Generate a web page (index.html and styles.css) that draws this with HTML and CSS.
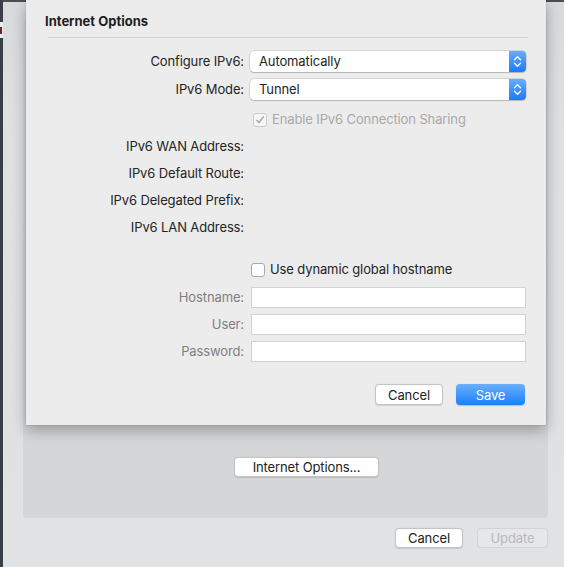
FILE: index.html
```html
<!DOCTYPE html>
<html>
<head>
<meta charset="utf-8">
<link rel="stylesheet" href="styles.css">
</head>
<body>
<div class="screen">
  <div class="edge"><div class="edge-peek"><span class="peek-mark"></span></div></div>
  <div class="window">
    <div class="group">
      <button class="btn btn-options">Internet Options...</button>
    </div>
    <div class="footer">
      <button class="btn btn-cancel-main">Cancel</button>
      <button class="btn btn-disabled">Update</button>
    </div>

    <div class="sheet">
      <div class="sheet-title">Internet Options</div>
      <div class="sep"></div>
      <div class="form">
        <div class="row row-popup">
          <div class="label">Configure IPv6:</div>
          <div class="popup"><span class="popup-text">Automatically</span><span class="popup-arrow"><svg width="9" height="13" viewBox="0 0 9 13"><path d="M1.5 4.8 L4.5 1.8 L7.5 4.8 M1.5 8.2 L4.5 11.2 L7.5 8.2" fill="none" stroke="#fff" stroke-width="1.3" stroke-linecap="round" stroke-linejoin="round"/></svg></span></div>
        </div>
        <div class="row row-popup row-gap7">
          <div class="label">IPv6 Mode:</div>
          <div class="popup"><span class="popup-text">Tunnel</span><span class="popup-arrow"><svg width="9" height="13" viewBox="0 0 9 13"><path d="M1.5 4.8 L4.5 1.8 L7.5 4.8 M1.5 8.2 L4.5 11.2 L7.5 8.2" fill="none" stroke="#fff" stroke-width="1.3" stroke-linecap="round" stroke-linejoin="round"/></svg></span></div>
        </div>
        <div class="row row-line row-share">
          <div class="label"></div>
          <div class="check-wrap disabled">
            <span class="checkbox checked"><svg width="10" height="10" viewBox="0 0 10 10"><path d="M1.8 5.2 L4 7.6 L8.4 1.8" fill="none" stroke="#a8a8a8" stroke-width="1.5" stroke-linecap="round" stroke-linejoin="round"/></svg></span>
            <span class="check-text">Enable IPv6 Connection Sharing</span>
          </div>
        </div>
        <div class="row row-line"><div class="label">IPv6 WAN Address:</div><div></div></div>
        <div class="row row-line"><div class="label">IPv6 Default Route:</div><div></div></div>
        <div class="row row-line"><div class="label">IPv6 Delegated Prefix:</div><div></div></div>
        <div class="row row-line"><div class="label">IPv6 LAN Address:</div><div></div></div>
        <div class="row row-line row-host">
          <div class="label"></div>
          <div class="check-wrap check-host">
            <span class="checkbox"></span>
            <span class="check-text">Use dynamic global hostname</span>
          </div>
        </div>
        <div class="row row-field row-first-field">
          <div class="label dim">Hostname:</div>
          <div class="field"></div>
        </div>
        <div class="row row-field">
          <div class="label dim">User:</div>
          <div class="field"></div>
        </div>
        <div class="row row-field">
          <div class="label dim">Password:</div>
          <div class="field"></div>
        </div>
      </div>
      <div class="sheet-buttons">
        <button class="btn btn-cancel">Cancel</button>
        <button class="btn btn-save">Save</button>
      </div>
    </div>
  </div>
</div>
</body>
</html>
```

FILE: styles.css
```css
* { box-sizing: border-box; }
html, body {
  margin: 0;
  padding: 0;
  width: 564px;
  height: 567px;
  overflow: hidden;
  font-family: Inter, "Liberation Sans", sans-serif;
  font-size: 13px;
  letter-spacing: -0.12px;
  color: #242424;
}
.screen {
  display: flex;
  width: 564px;
  height: 567px;
}
.edge {
  width: 3px;
  background: #3a3f47;
  padding-top: 22px;
}
.edge-peek {
  width: 3px;
  height: 16px;
  background: #ececec;
  position: relative;
}
.peek-mark {
  position: absolute;
  left: 0;
  top: 5px;
  width: 2px;
  height: 7px;
  background: #6a2828;
}
.window {
  flex: 1;
  position: relative;
  background: linear-gradient(#d9dadc, #dfe0e2 120px, #e1e2e4);
  border-top: 2px solid #4a4e55;
  padding: 18px 16px 0 20px;
  display: flex;
  flex-direction: column;
}
.group {
  height: 498px;
  background: #d5d6d8;
  border-radius: 4px;
  padding-top: 437px;
  padding-left: 211px;
}
.footer {
  display: flex;
  justify-content: flex-end;
  gap: 14px;
  margin-top: 10px;
}
.btn {
  font-family: inherit;
  font-size: 13px;
  letter-spacing: -0.12px;
  height: 20px;
  padding: 0;
  border-radius: 4px;
  border: 1px solid #c4c4c4;
  background: #fff;
  color: #222;
  box-shadow: 0 0.5px 1px rgba(0,0,0,0.12);
  line-height: 18px;
  text-align: center;
}
.btn-options { width: 145px; }
.btn-cancel-main { width: 68px; }
.btn-disabled {
  width: 71px;
  background: #e6e7e9;
  border-color: #d2d3d5;
  color: #b7b8ba;
  box-shadow: none;
}

.sheet {
  position: absolute;
  left: 23px;
  top: -2px;
  width: 520px;
  height: 425px;
  background: #ececec;
  box-shadow: 0 5px 14px rgba(0,0,0,0.3), 0 0 0 0.5px rgba(0,0,0,0.12);
  padding-top: 13px;
}
.sheet-title {
  font-weight: 700;
  font-size: 13px;
  letter-spacing: 0;
  line-height: 16px;
  padding-left: 19px;
  color: #1e1e1e;
}
.sep {
  height: 1px;
  background: #d3d3d3;
  margin: 8px 18px 0 22px;
}
.form {
  display: flex;
  flex-direction: column;
  margin-top: 13px;
}
.row {
  display: grid;
  grid-template-columns: 218px 276px;
  column-gap: 6px;
  align-items: center;
}
.label {
  text-align: right;
  white-space: nowrap;
  line-height: 15px;
  padding-bottom: 1px;
}
.label.dim { color: #7f7f7f; }
.row-popup { height: 21px; }
.row-gap7 { margin-top: 7px; }
.row-line { height: 27px; }
.row-share { margin-top: 6px; }
.row-host { margin-top: 15px; }
.row-field { height: 21px; margin-top: 6px; }
.row-first-field { margin-top: 4px; }

.popup {
  height: 21px;
  background: #fff;
  border-radius: 4px;
  box-shadow: 0 0 0 0.5px rgba(0,0,0,0.2), 0 1px 1px rgba(0,0,0,0.15);
  display: flex;
  align-items: center;
  justify-content: space-between;
  overflow: hidden;
}
.popup-text {
  padding-left: 9px;
  padding-bottom: 1px;
}
.popup-arrow {
  width: 17px;
  height: 21px;
  background: linear-gradient(#67aefc, #1b7cf6);
  display: flex;
  align-items: center;
  justify-content: center;
}
.check-wrap {
  display: flex;
  align-items: center;
  gap: 5px;
  padding-left: 3px;
}
.check-host { padding-left: 1px; }
.check-text { padding-bottom: 1px; }
.checkbox {
  width: 14px;
  height: 14px;
  border-radius: 3px;
  background: #fff;
  border: 1px solid #a9a9a9;
  display: flex;
  align-items: center;
  justify-content: center;
}
.disabled .checkbox {
  border-color: #cacaca;
  background: #f7f7f7;
}
.disabled .check-text { color: #a9a9a9; }
.field {
  height: 21px;
  margin-left: 1px;
  background: #fff;
  border: 1px solid #d3d3d3;
}
.sheet-buttons {
  display: flex;
  justify-content: flex-end;
  gap: 13px;
  margin-top: 22px;
  padding-right: 21px;
}
.btn-cancel { width: 68px; height: 21px; }
.btn-save {
  width: 69px;
  height: 21px;
  border: none;
  background: linear-gradient(#69b0fb, #1b80fb);
  color: #fff;
  box-shadow: 0 0.5px 1px rgba(0,0,0,0.2);
}
```
